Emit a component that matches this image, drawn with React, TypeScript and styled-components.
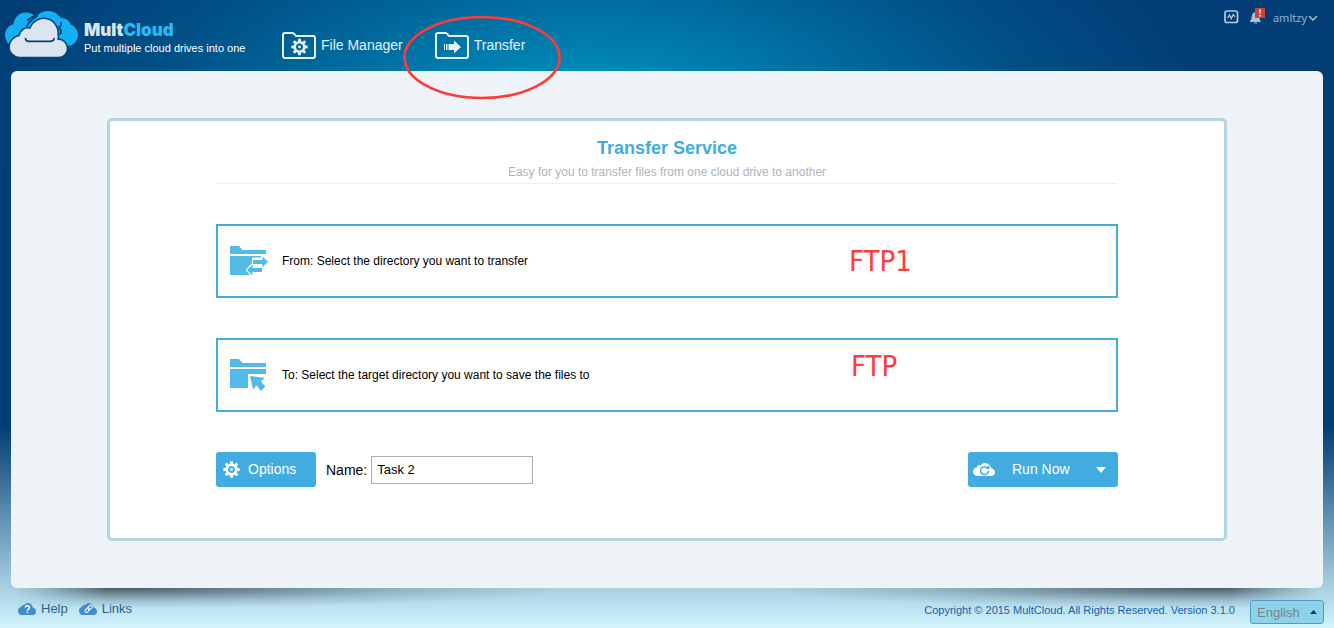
import React, { useState } from "react";
import styled, { createGlobalStyle } from "styled-components";

const blue = "#40acdf";
const iconBlue = "#4fbbe6";
const annotationRed = "#ff3a3a";

const GlobalStyle = createGlobalStyle`
  *, *::before, *::after { box-sizing: border-box; }
  body {
    margin: 0;
    font-family: "Liberation Sans", Arial, sans-serif;
    font-size: 12px;
    color: #000;
  }
  button, input, select { font-family: inherit; }
`;

const Page = styled.div`
  min-height: 100vh;
  display: flex;
  flex-direction: column;
  background:
    radial-gradient(ellipse 620px 260px at 44% 110px, #009bc5 0%, #008ab8 14%, #00699d 45%, #004f84 72%, rgba(2, 61, 117, 0) 100%),
    linear-gradient(#023d75 0%, #023d75 68%, #d2f5fd 100%);
`;

const Header = styled.header`
  position: relative;
  display: flex;
  align-items: flex-start;
  height: 71px;
  padding: 0 16px 0 5px;
`;

const Brand = styled.a`
  display: flex;
  gap: 6px;
  width: 277px;
  padding-top: 11px;
  color: #fff;
  text-decoration: none;
`;

const BrandText = styled.span`
  display: flex;
  flex-direction: column;
  padding-top: 8px;
`;

const Wordmark = styled.span`
  font: 900 17px/22px Inter, sans-serif;
  color: #dbe5ef;
`;

const WordmarkAccent = styled.span`
  color: #2ab7f6;
`;

const Tagline = styled.span`
  font-size: 11px;
  line-height: 14px;
  white-space: nowrap;
`;

const Nav = styled.nav`
  display: flex;
  gap: 32px;
  padding-top: 32px;
`;

const NavLink = styled.a`
  display: flex;
  gap: 5px;
  color: #e3f1f8;
  font-size: 14px;
  line-height: 26px;
  text-decoration: none;
  white-space: nowrap;
`;

const Account = styled.div`
  display: flex;
  align-items: flex-start;
  margin-left: auto;
  padding-top: 8px;
`;

const IconButton = styled.button<{ $gap: number }>`
  display: block;
  margin-right: ${(p) => p.$gap}px;
  padding: 0;
  border: 0;
  background: none;
  line-height: 0;
`;

const UserButton = styled.button`
  display: flex;
  align-items: center;
  gap: 1px;
  padding: 0;
  border: 0;
  background: none;
  color: #8fb4d2;
  font: 11px/20px "Noto Sans", sans-serif;
`;

const Highlight = styled.svg`
  position: absolute;
  left: 402px;
  top: 14px;
  z-index: 2;
  pointer-events: none;
`;

const PanelShell = styled.main`
  position: relative;
  display: flex;
  flex: 1;
  margin: 0 11px;

  &::before,
  &::after {
    content: "";
    position: absolute;
    top: 100%;
    width: 45%;
    height: 20px;
    background: radial-gradient(
      ellipse 440px 20px at 110px 0,
      rgba(50, 66, 76, 0.8) 0%,
      rgba(50, 66, 76, 0.5) 30%,
      rgba(50, 66, 76, 0.18) 65%,
      rgba(50, 66, 76, 0) 100%
    );
    mask-image: linear-gradient(to right, transparent 0, #000 90px);
    pointer-events: none;
  }
  &::before {
    left: 4px;
  }
  &::after {
    right: 4px;
    transform: scaleX(-1);
  }
`;

const Panel = styled.div`
  flex: 1;
  padding: 47px 96px;
  border-radius: 6px;
  background: #edf3f6;
`;

const Card = styled.section`
  padding: 15px 106px 51px;
  border: 3px solid #b2d5e1;
  border-radius: 5px;
  background: #fff;
`;

const CardHeader = styled.header`
  padding-bottom: 3px;
  border-bottom: 1px solid #ededed;
  text-align: center;
`;

const Title = styled.h1`
  margin: 0;
  color: ${blue};
  font-size: 18px;
  line-height: 24px;
`;

const Subtitle = styled.p`
  margin: 4px 0 0;
  color: #b3b3b3;
  line-height: 16px;
`;

const Picker = styled.div`
  position: relative;
  margin-top: 40px;
`;

const PickerButton = styled.button`
  display: flex;
  align-items: center;
  gap: 14px;
  width: 100%;
  height: 74px;
  padding: 0 12px;
  border: 2px solid ${blue};
  background: #fff;
  color: #000;
  font-size: 12px;
  text-align: left;
`;

const Note = styled.span<{ $left: number; $top: number }>`
  position: absolute;
  left: ${(p) => p.$left}px;
  top: ${(p) => p.$top}px;
  color: ${annotationRed};
  font: 29px/32px "DejaVu Sans Condensed", "DejaVu Sans", sans-serif;
  pointer-events: none;
`;

const Actions = styled.div`
  display: flex;
  align-items: center;
  margin-top: 40px;
`;

const OptionsButton = styled.button`
  display: flex;
  align-items: center;
  gap: 8px;
  width: 100px;
  height: 35px;
  padding: 0 7px 1px;
  border: 0;
  border-radius: 3px;
  background: ${blue};
  color: #fff;
  font-size: 14px;
`;

const NameLabel = styled.label`
  margin: 0 4px 0 10px;
  font-size: 14px;
`;

const NameInput = styled.input`
  width: 162px;
  height: 28px;
  padding: 0 5px;
  border: 1px solid #b0b0b0;
  color: #000;
  font-size: 13px;
`;

const SplitButton = styled.div`
  display: flex;
  width: 150px;
  height: 35px;
  margin-left: auto;
  border-radius: 3px;
  background: ${blue};
`;

const RunButton = styled.button`
  display: flex;
  flex: 1;
  align-items: center;
  gap: 17px;
  padding: 0 0 1px 5px;
  border: 0;
  background: none;
  color: #fff;
  font-size: 14px;
`;

const RunMenuButton = styled.button`
  display: flex;
  align-items: center;
  justify-content: center;
  width: 35px;
  padding: 0;
  border: 0;
  background: none;
`;

const Footer = styled.footer`
  position: relative;
  z-index: 1;
  display: flex;
  align-items: center;
  gap: 11px;
  height: 40px;
  padding: 0 10px 0 18px;
`;

const FooterLink = styled.a`
  display: flex;
  align-items: center;
  gap: 5px;
  color: #2f5d91;
  font-size: 13px;
  text-decoration: none;
`;

const Copyright = styled.span`
  margin-left: auto;
  padding-top: 3px;
  color: #1560ac;
  font-size: 11px;
`;

const LanguageField = styled.div`
  display: grid;
  align-items: center;
  width: 74px;
  margin: 8px 0 0 4px;
`;

const LanguageSelect = styled.select`
  grid-area: 1 / 1;
  appearance: none;
  width: 100%;
  height: 24px;
  padding: 0 6px;
  border: 1px solid #5599cc;
  border-radius: 3px;
  background: #8dd2e9;
  color: #74858d;
  font-size: 13px;
`;

const LanguageArrow = styled.svg`
  grid-area: 1 / 1;
  justify-self: end;
  margin-right: 7px;
  pointer-events: none;
`;

const toothAngles = [0, 45, 90, 135, 180, 225, 270, 315];

function GearShape({ color }: { color: string }) {
  return (
    <g>
      <circle r="4.7" fill="none" stroke={color} strokeWidth="2.4" />
      <circle r="1.4" fill={color} />
      {toothAngles.map((angle) => (
        <path key={angle} d="M-1.7 -5.3L-1.3 -8.2H1.3L1.7 -5.3Z" fill={color} transform={`rotate(${angle})`} />
      ))}
    </g>
  );
}

function LogoMark() {
  return (
    <svg width="73" height="47" viewBox="0 0 73 47" aria-hidden="true">
      <g fill="#13aff5">
        <circle cx="21" cy="14" r="12.5" />
        <circle cx="11" cy="24" r="11" />
        <circle cx="43" cy="15" r="15" />
        <circle cx="57" cy="16" r="9" />
        <circle cx="62" cy="24" r="11" />
        <path d="M5 20H68L70 31L60 35H6L2 31Z" />
      </g>
      <g fill="none" stroke="#03427a" strokeWidth="1.8" strokeLinecap="round">
        <path d="M22 15Q25 9 31 6" />
        <path d="M53 17Q57 15 56 12M55 18Q57 21 55 23" />
        <path d="M23 9Q27 5 32 5" />
      </g>
      <path
        d="M14 46.5A11 11 0 0 1 4 36A12 12 0 0 1 14 24.500A9 9 0 0 1 25 17A14.500 14.500 0 0 1 53 24Q54 25 53 28A9.500 9.500 0 0 1 62.500 38A9 9 0 0 1 53 46.500Z"
        fill="#dbe5ef"
        stroke="#03427a"
        strokeWidth="1.5"
      />
      <path d="M20.500 27.500Q20.500 30.300 24 30.300H45Q49 30.300 49 27.500" fill="none" stroke="#0b3c72" strokeWidth="1.7" strokeLinecap="round" />
    </svg>
  );
}

function NavFolder({ children }: { children: React.ReactNode }) {
  return (
    <svg width="34" height="27" viewBox="0 0 34 27" aria-hidden="true">
      <path
        d="M1 3Q1 1 3 1H10.500Q11.500 1 12.200 2L14 4H31Q33 4 33 6V24Q33 26 31 26H3Q1 26 1 24Z"
        fill="none"
        stroke="#e3f1f8"
        strokeWidth="2"
      />
      {children}
    </svg>
  );
}

function FromIcon() {
  return (
    <svg width="38" height="34" viewBox="0 0 38 34" fill={iconBlue} aria-hidden="true">
      <path d="M0 2H9L12.500 6H36V10H0Z" />
      <path d="M0 12H31V13.500H22V19L15.500 26L20 31H0Z" />
      <path d="M23 16H32.500V12.500L38 17.800L32.500 23V20H23Z" />
      <path d="M32 28H22.500V31.500L17 26L22.500 20.500V24H32Z" />
    </svg>
  );
}

function ToIcon() {
  return (
    <svg width="38" height="34" viewBox="0 0 38 34" fill={iconBlue} aria-hidden="true">
      <path d="M0 1H9L12.500 5H36V9H0Z" />
      <path d="M0 11H36V16H18V30H0Z" />
      <path d="M20 18L35 20L31 23.300L35.300 28.500L31 33L26.500 27.500L23 31.500Z" />
    </svg>
  );
}

const cloudPath =
  "M5 14A4.500 4.500 0 0 1 0 9.700A4.300 4.300 0 0 1 3.500 5.500A3.500 3.500 0 0 1 7.500 3.200A6 6 0 0 1 18 6Q22 7 22 10.500A4 4 0 0 1 18 14Z";

function CloudGlyph({ width, height, color, children }: { width: number; height: number; color: string; children: React.ReactNode }) {
  return (
    <svg width={width} height={height} viewBox="0 0 22 14" preserveAspectRatio="none" aria-hidden="true">
      <path d={cloudPath} fill={color} />
      {children}
    </svg>
  );
}

export default function App() {
  const [taskName, setTaskName] = useState("Task 2");

  return (
    <>
      <GlobalStyle />
      <Page>
        <Header>
          <Brand href="#home">
            <LogoMark />
            <BrandText>
              <Wordmark>
                Mult<WordmarkAccent>Cloud</WordmarkAccent>
              </Wordmark>
              <Tagline>Put multiple cloud drives into one</Tagline>
            </BrandText>
          </Brand>
          <Nav>
            <NavLink href="#files">
              <NavFolder>
                <g transform="translate(17.5 15)">
                  <GearShape color="#e3f1f8" />
                </g>
              </NavFolder>
              File Manager
            </NavLink>
            <NavLink href="#transfer">
              <NavFolder>
                <path d="M9 12H10V18H9ZM11 12H12.500V18H11ZM13.500 12H19V8.500L26 15L19 21.500V18H13.500Z" fill="#e3f1f8" />
              </NavFolder>
              Transfer
            </NavLink>
          </Nav>
          <Account>
            <IconButton $gap={11} aria-label="Activity">
              <svg width="15" height="16" viewBox="0 0 15 16" fill="none" stroke="#b4cbdb" aria-hidden="true">
                <rect x="1" y="3" width="12.500" height="11.500" rx="2" strokeWidth="1.700" />
                <path d="M3.500 10L5.500 7L7.300 10.500L9.300 6.500L11 9" strokeWidth="1.300" />
              </svg>
            </IconButton>
            <IconButton $gap={8} aria-label="Notifications">
              <svg width="15" height="17" viewBox="0 0 15 17" aria-hidden="true">
                <path d="M0 14V13Q1.800 11.500 1.800 8.500Q2 4.500 5.500 4Q9 4.500 9.300 8.500Q9.300 11.500 10.500 13V14Z" fill="#a9c3d3" />
                <path d="M4 14.500H7V15.500H4Z" fill="#a9c3d3" />
                <path d="M5 0H15V10H5Z" fill="#cf4235" />
                <path d="M9 1.500H11L10.500 6H9.500ZM9.200 7H10.800V8.500H9.200Z" fill="#fff" />
              </svg>
            </IconButton>
            <UserButton>
              amltzy
              <svg width="10" height="6" viewBox="0 0 10 6" fill="none" stroke="#a9c3d3" strokeWidth="1.500" aria-hidden="true">
                <path d="M1 1L5 5L9 1" />
              </svg>
            </UserButton>
          </Account>
          <Highlight width="160" height="86" viewBox="0 0 160 86" fill="none" aria-hidden="true">
            <ellipse cx="80" cy="43.500" rx="77.500" ry="40.500" stroke={annotationRed} strokeWidth="2.700" />
          </Highlight>
        </Header>

        <PanelShell>
          <Panel>
            <Card>
              <CardHeader>
                <Title>Transfer Service</Title>
                <Subtitle>Easy for you to transfer files from one cloud drive to another</Subtitle>
              </CardHeader>
              <Picker>
                <PickerButton>
                  <FromIcon />
                  From: Select the directory you want to transfer
                </PickerButton>
                <Note $left={633} $top={21}>FTP1</Note>
              </Picker>
              <Picker>
                <PickerButton>
                  <ToIcon />
                  To: Select the target directory you want to save the files to
                </PickerButton>
                <Note $left={635} $top={12}>FTP</Note>
              </Picker>
              <Actions>
                <OptionsButton>
                  <svg width="17" height="17" viewBox="-8.500 -8.500 17 17" aria-hidden="true">
                    <GearShape color="#fff" />
                  </svg>
                  Options
                </OptionsButton>
                <NameLabel htmlFor="task-name">Name:</NameLabel>
                <NameInput id="task-name" value={taskName} onChange={(e) => setTaskName(e.target.value)} />
                <SplitButton>
                  <RunButton>
                    <CloudGlyph width={22} height={14} color="#fff">
                      <path d="M14.500 6A4 4 0 1 0 15.500 8.500" fill="none" stroke={blue} strokeWidth="1.500" />
                      <path d="M12.500 7H16.500V3Z" fill={blue} />
                    </CloudGlyph>
                    Run Now
                  </RunButton>
                  <RunMenuButton aria-label="More run options">
                    <svg width="10" height="6" viewBox="0 0 10 6" fill="#fff" aria-hidden="true">
                      <path d="M0 0H10L5 6Z" />
                    </svg>
                  </RunMenuButton>
                </SplitButton>
              </Actions>
            </Card>
          </Panel>
        </PanelShell>

        <Footer>
          <FooterLink href="#help">
            <CloudGlyph width={18} height={13} color="#438ccb">
              <path d="M9 6Q9 4 11.500 4Q14 4 14 6Q14 7.300 12.500 8Q11.500 8.500 11.500 9.500M11.500 10.500V12" fill="none" stroke="#fff" strokeWidth="1.700" />
            </CloudGlyph>
            Help
          </FooterLink>
          <FooterLink href="#links">
            <CloudGlyph width={18} height={13} color="#438ccb">
              <g fill="none" stroke="#e6f4fb" strokeWidth="1.300">
                <rect x="7" y="7" width="6" height="3.500" rx="1.700" transform="rotate(-42 10 8.700)" />
                <rect x="10.500" y="4" width="6" height="3.500" rx="1.700" transform="rotate(-42 13.500 5.700)" />
              </g>
            </CloudGlyph>
            Links
          </FooterLink>
          <Copyright>Copyright © 2015 MultCloud. All Rights Reserved. Version 3.1.0</Copyright>
          <LanguageField>
            <LanguageSelect aria-label="Language" defaultValue="English">
              <option>English</option>
            </LanguageSelect>
            <LanguageArrow width="7" height="4" viewBox="0 0 7 4" fill="#034078" aria-hidden="true">
              <path d="M0 4L3.500 0L7 4Z" />
            </LanguageArrow>
          </LanguageField>
        </Footer>
      </Page>
    </>
  );
}
